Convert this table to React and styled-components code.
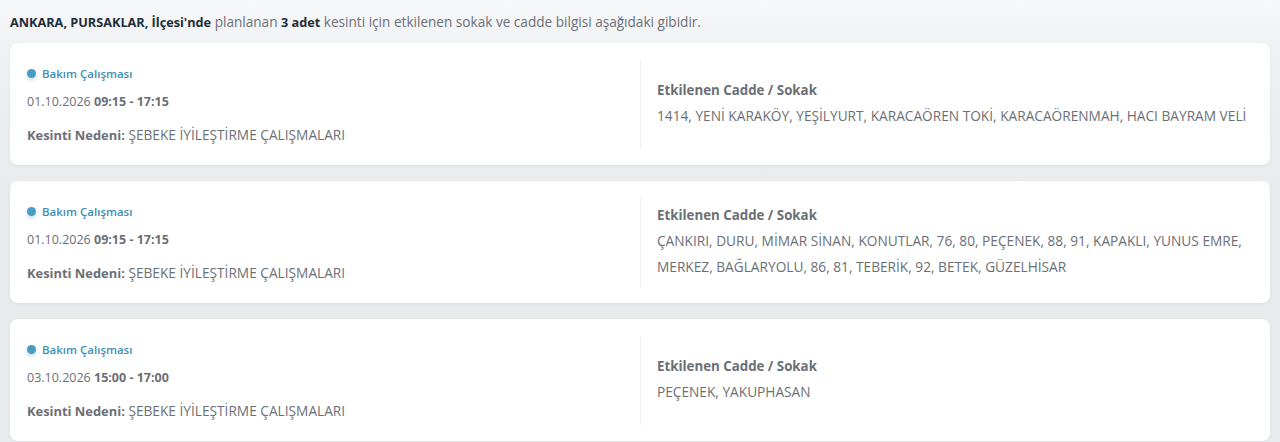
import React from 'react'
import styled, { createGlobalStyle } from 'styled-components'

const outages = [
  {
    date: '01.10.2026',
    time: '09:15 - 17:15',
    reason: 'ŞEBEKE İYİLEŞTİRME ÇALIŞMALARI',
    streets:
      '1414, YENİ KARAKÖY, YEŞİLYURT, KARACAÖREN TOKİ, KARACAÖRENMAH, HACI BAYRAM VELİ',
  },
  {
    date: '01.10.2026',
    time: '09:15 - 17:15',
    reason: 'ŞEBEKE İYİLEŞTİRME ÇALIŞMALARI',
    streets:
      'ÇANKIRI, DURU, MİMAR SİNAN, KONUTLAR, 76, 80, PEÇENEK, 88, 91, KAPAKLI, YUNUS EMRE, MERKEZ, BAĞLARYOLU, 86, 81, TEBERİK, 92, BETEK, GÜZELHİSAR',
  },
  {
    date: '03.10.2026',
    time: '15:00 - 17:00',
    reason: 'ŞEBEKE İYİLEŞTİRME ÇALIŞMALARI',
    streets: 'PEÇENEK, YAKUPHASAN',
  },
]

const App = () => (
  <>
    <GlobalStyle />
    <Page>
      <Summary>
        <b>ANKARA, PURSAKLAR, İlçesi'nde</b> planlanan <b>3 adet</b> kesinti
        için etkilenen sokak ve cadde bilgisi aşağıdaki gibidir.
      </Summary>
      <List>
        {outages.map((o, i) => (
          <Card key={i}>
            <Info>
              <Type>
                <Dot />
                Bakım Çalışması
              </Type>
              <When>
                {o.date} <b>{o.time}</b>
              </When>
              <Reason>
                <b>Kesinti Nedeni:</b> {o.reason}
              </Reason>
            </Info>
            <Streets>
              <StreetsTitle>Etkilenen Cadde / Sokak</StreetsTitle>
              <StreetsText>{o.streets}</StreetsText>
            </Streets>
          </Card>
        ))}
      </List>
    </Page>
  </>
)

export default App

const GlobalStyle = createGlobalStyle`
  body {
    margin: 0;
    background: #e9eaec;
    font-family: 'Open Sans', 'Liberation Sans', sans-serif;
  }
`
const Page = styled.div`
  min-height: 442px;
  padding: 13px 10px 0;
  box-sizing: border-box;
  background: linear-gradient(180deg, #f7f8f9 0px, #eff0f2 60px, #e9eaec 200px);
`
const Summary = styled.div`
  font-size: 13.6px;
  line-height: 18px;
  color: #6b7079;
  b {
    font-size: 12.7px;
    color: #1f2d3a;
    font-weight: 700;
  }
`
const List = styled.div`
  display: flex;
  flex-direction: column;
  gap: 16px;
  margin-top: 12px;
`
const Card = styled.div`
  display: grid;
  grid-template-columns: 1fr 1fr;
  background: #fff;
  border-radius: 8px;
  padding: 17px 17px 16px;
  box-shadow: 0 1px 3px rgba(30, 40, 60, 0.06);
`
const Info = styled.div`
  display: flex;
  flex-direction: column;
  justify-content: center;
  color: #6b6f76;
  font-size: 13.7px;
`
const Type = styled.div`
  display: flex;
  align-items: center;
  gap: 6px;
  font-size: 11.5px;
  line-height: 18px;
  font-weight: 600;
  color: #3d8fb4;
`
const Dot = styled.span`
  width: 9px;
  height: 9px;
  border-radius: 50%;
  background: #4a9cc2;
  box-shadow: 0 2px 4px rgba(74, 156, 194, 0.35);
`
const When = styled.div`
  margin-top: 9px;
  line-height: 20px;
  font-size: 12.5px;
  b {
    font-weight: 700;
  }
`
const Reason = styled.div`
  margin-top: 13px;
  line-height: 20px;
  b {
    font-size: 12.9px;
    font-weight: 700;
  }
`
const Streets = styled.div`
  min-height: 89px;
  display: flex;
  flex-direction: column;
  justify-content: center;
  padding-left: 16px;
  border-left: 1px solid #eeeff1;
  color: #6b6f76;
  font-size: 13.7px;
`
const StreetsTitle = styled.div`
  font-size: 13.3px;
  font-weight: 700;
  line-height: 20px;
  margin-bottom: 3px;
`
const StreetsText = styled.div`
  line-height: 26px;
`
